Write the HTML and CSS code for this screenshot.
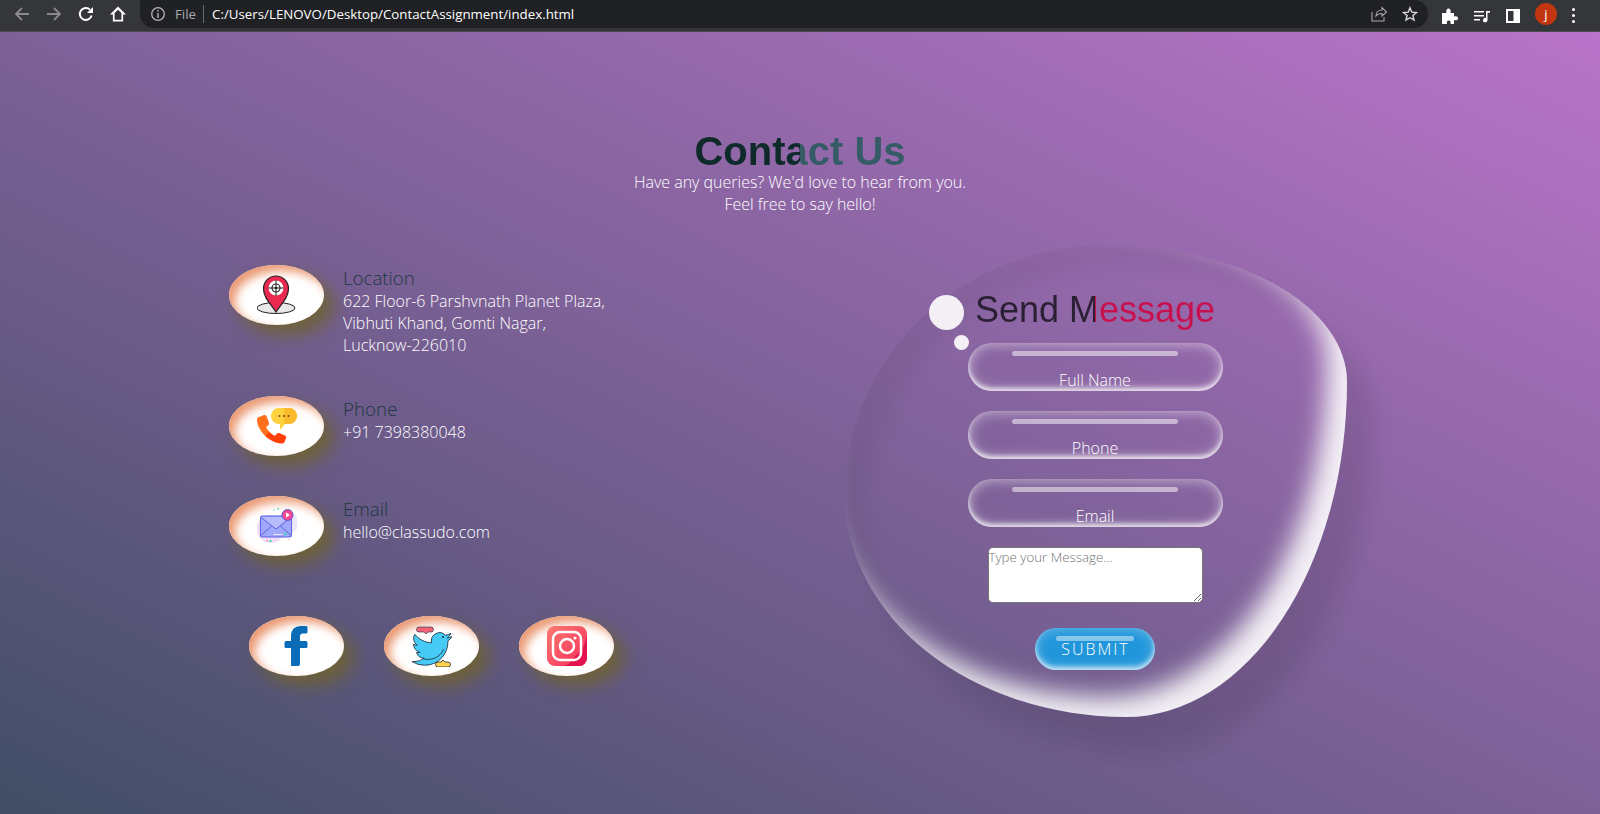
FILE: index.html
```html
<!DOCTYPE html>
<html lang="en">
<head>
  <meta charset="UTF-8">
  <meta name="viewport" content="width=device-width, initial-scale=1.0">
  <title>Contact Us</title>
  <link rel="stylesheet" href="styles.css">
</head>

<body>

  <!-- Browser toolbar -->
  <div class="toolbar">
    <div class="nav-icons">
      <svg class="tool-icon" viewBox="0 0 16 16"><path d="M15 8H2M8 2 2 8l6 6" stroke="#8a8b8d" fill="none" stroke-width="1.8"/></svg>
      <svg class="tool-icon" viewBox="0 0 16 16"><path d="M1 8h13M8 2l6 6-6 6" stroke="#8a8b8d" fill="none" stroke-width="1.8"/></svg>
      <svg class="tool-icon" viewBox="0 0 16 16"><path d="M13.6 9.5A6 6 0 1 1 12 3.6" stroke="#fff" fill="none" stroke-width="2"/><path d="M15 1v6H9z" fill="#fff"/></svg>
      <svg class="tool-icon" viewBox="1 1 14 14"><path d="M8 1.500 1 8.500h2.500v6h9v-6H15zM8 4.200l3 3v5.800H5V7.200z" fill="#fff" fill-rule="evenodd"/></svg>
    </div>
    <div class="address-bar">
      <svg class="info-icon" viewBox="0 0 16 16"><circle cx="8" cy="8" r="6.300" stroke="#b5b6b8" stroke-width="1.300" fill="none"/><path d="M7.300 7h1.400v5H7.300zM7.300 4h1.400v1.500H7.300z" fill="#b5b6b8"/></svg>
      <span class="scheme">File</span>
      <span class="url">C:/Users/LENOVO/Desktop/ContactAssignment/index.html</span>
      <svg class="bar-icon share-icon" viewBox="0 0 16 16"><path d="M1 6v9h12v-4M5 10c0-4 3-6 6-6V1.500L15.500 6 11 10V7.500c-3 0-5 1-6 2.500z" stroke="#a9aaac" fill="none" stroke-width="1.100"/></svg>
      <svg class="bar-icon" viewBox="0 0 16 16"><path d="m8 1.800 1.800 4.300 4.700.4-3.600 3 1.100 4.600L8 11.700l-4 2.400 1.100-4.600-3.600-3 4.700-.4z" stroke="#d5d6d7" fill="none" stroke-width="1.400"/></svg>
    </div>
    <div class="ext-icons">
      <svg class="tool-icon puzzle-icon" viewBox="0 0 16 16"><path d="M0 5h4.500C3.700 2 5 .5 6.500.5S9.300 2 8.500 5H12v3.500c3-.8 4 .4 4 1.800s-1 2.600-4 1.800V16H8.500c.6-2.800-.4-3.600-1.700-3.600S4.400 13.200 5 16H0z" fill="#fff"/></svg>
      <svg class="tool-icon" viewBox="0 0 16 16"><path d="M0 3h10v1.400H0zM0 7h10v1.400H0zM0 11h6v1.400H0z" fill="#fff"/><path d="M12 3h4v1.800h-2.500V12a2.200 2.200 0 1 1-1.500-2z" fill="#fff"/></svg>
      <svg class="tool-icon" viewBox="0 0 16 16"><path d="M1 1h14v14H1zM3 3v10h5.500V3z" fill="#fff" fill-rule="evenodd"/></svg>
      <span class="avatar">j</span>
      <span class="menu-dots"><i></i><i></i><i></i></span>
    </div>
  </div>

  <div class="page">
    <div class="heading">
      <h1>Contact Us</h1>
      <p>Have any queries? We'd love to hear from you.<br>Feel free to say hello!</p>
    </div>

    <div class="content">
      <div class="info">
        <div class="info-row">
          <div class="oval">
            <svg width="40" height="40" viewBox="1 0 40 40">
              <ellipse cx="20" cy="33" rx="19" ry="5.500" fill="#e8e8e8" stroke="#222" stroke-width="1"/>
              <path d="M20 37C15 29 7.500 23 7.500 13.500a12.500 12.500 0 0 1 25 0c0 9.500-7.500 15.500-12.500 23.500z" fill="#e9294f" stroke="#222" stroke-width="1.200"/>
              <circle cx="20" cy="13" r="7.500" fill="#fff"/>
              <circle cx="20" cy="13" r="4" fill="none" stroke="#222" stroke-width="1.200"/>
              <circle cx="20" cy="13" r="1.300" fill="#222"/>
              <path d="M20 5v16M12 13h16" stroke="#222" stroke-width="1"/>
            </svg>
          </div>
          <div class="info-text">
            <h3>Location</h3>
            <p>622 Floor-6 Parshvnath Planet Plaza,<br>Vibhuti Khand, Gomti Nagar,<br>Lucknow-226010</p>
          </div>
        </div>

        <div class="info-row">
          <div class="oval">
            <svg width="40" height="36" viewBox="0 0 40 36">
              <defs>
                <linearGradient id="handset" x1="0" y1="0" x2="1" y2="1">
                  <stop offset="0.52" stop-color="#ff6f1e"/>
                  <stop offset="0.52" stop-color="#ff3f04"/>
                </linearGradient>
              </defs>
              <path d="M2 9l5-2c1 0 2 0 2.500 1L12 15c0 1 0 2-1 2.500l-2 1.500c2 4 5 7 9 9l1.500-2c.5-1 1.500-1 2.500-1l6 2.500c1 .5 1.500 1.500 1 2.500l-1.500 4c-.5 1-1.500 1.500-3 1.500C12 35 0 22 0 11.500 0 10 1 9 2 9z" fill="url(#handset)"/>
              <path d="M22 0h10a8 8 0 0 1 0 16h-4l-5 6v-6h-1a8 8 0 0 1 0-16z" fill="#ffd240"/>
              <path d="M27 0h5a8 8 0 0 1 0 16h-5z" fill="#fbb92e"/>
              <circle cx="22.500" cy="8" r="1" fill="#7a4a2a"/><circle cx="27" cy="8" r="1" fill="#7a4a2a"/><circle cx="31.500" cy="8" r="1" fill="#7a4a2a"/>
            </svg>
          </div>
          <div class="info-text">
            <h3>Phone</h3>
            <p>+91 7398380048</p>
          </div>
        </div>

        <div class="info-row">
          <div class="oval">
            <svg width="40" height="40" viewBox="1.500 0 40 40">
              <circle cx="15" cy="23" r="14" fill="#f3dcf5"/>
              <circle cx="32" cy="17" r="11" fill="#ece6fb"/>
              <rect x="5" y="10" width="31" height="21" rx="1.500" fill="#9fa8fb" stroke="#5b62dd" stroke-width="1"/>
              <path d="M5 11l15.500 12L36 11" fill="#b6bcfd" stroke="#5b62dd" stroke-width="1"/>
              <path d="M5 30l11-10M36 30 25 20" stroke="#5b62dd" stroke-width="1"/>
              <circle cx="32" cy="9" r="5.500" fill="#f3488e" stroke="#6a55d8" stroke-width="1"/>
              <path d="m30.500 6.500 4 2.500-4 2.500z" fill="#fff"/>
              <path d="M22 2h1.500v1.500H22zM18 4h1v1h-1zM29 27h2v2h-2zM14 34h2v2h-2z" fill="#2fe3a8"/>
              <path d="M11 34h1.500v1.500H11zM33 33h1v1h-1z" fill="#f07fb6"/>
              <path d="M18 28h9v1h-9z" fill="#e4e7ff"/>
            </svg>
          </div>
          <div class="info-text">
            <h3>Email</h3>
            <p>hello@classudo.com</p>
          </div>
        </div>

        <div class="social">
          <div class="oval">
            <svg width="40" height="40" viewBox="0 0 40 40">
              <path d="M14 40V22H9a1.500 1.500 0 0 1-1.500-1.500v-4A1.500 1.500 0 0 1 9 15h5v-5C14 3.500 18 0 24 0h5a1.500 1.500 0 0 1 1.500 1.500V6A1.500 1.500 0 0 1 29 7.500h-3c-2 0-3 1-3 3V15h6a1.500 1.500 0 0 1 1.500 1.500v4A1.500 1.500 0 0 1 29 22h-6v16a2 2 0 0 1-2 2z" fill="#0a6cb6"/>
            </svg>
          </div>
          <div class="oval">
            <svg width="40" height="41" viewBox="0 0 40 41">
              <g transform="translate(0 3) scale(1.667)">
                <path d="M23.953 4.570a10 10 0 0 1-2.825.775 4.958 4.958 0 0 0 2.163-2.723c-.951.555-2.005.959-3.127 1.184a4.920 4.920 0 0 0-8.384 4.482C7.690 8.095 4.067 6.130 1.640 3.162a4.822 4.822 0 0 0-.666 2.475c0 1.710.870 3.213 2.188 4.096a4.904 4.904 0 0 1-2.228-.616v.060a4.923 4.923 0 0 0 3.946 4.827 4.996 4.996 0 0 1-2.212.085 4.936 4.936 0 0 0 4.604 3.417 9.867 9.867 0 0 1-6.102 2.105c-.390 0-.779-.023-1.170-.067a13.995 13.995 0 0 0 7.557 2.209c9.053 0 13.998-7.496 13.998-13.985 0-.210 0-.420-.015-.630A9.935 9.935 0 0 0 24 4.590z" fill="#45cbf5" stroke="#1c2a3a" stroke-width=".5"/>
                <path d="M7 18c5 1 10-1 12-6" fill="none" stroke="#1c2a3a" stroke-width=".5"/>
              </g>
              <circle cx="31" cy="11" r="1" fill="#1c2a3a"/>
              <path d="M7 1h12a2 2 0 0 1 0 5h-3l-2 2-2-2H7a2.500 2.500 0 0 1 0-5z" fill="#f2647a" stroke="#1c2a3a" stroke-width=".6"/>
              <path d="M26 36h3l2-2 2 2h3a2.300 2.300 0 0 1 0 5H26a2.500 2.500 0 0 1 0-5z" fill="#ffd04d" stroke="#1c2a3a" stroke-width=".8"/>
            </svg>
          </div>
          <div class="oval">
            <svg width="40" height="40" viewBox="0 0 40 40">
              <defs>
                <linearGradient id="insta" x1="0" y1="0" x2="1" y2="1">
                  <stop offset="0" stop-color="#ff7a70"/>
                  <stop offset="1" stop-color="#f32c5c"/>
                </linearGradient>
              </defs>
              <rect width="40" height="40" rx="8" fill="url(#insta)"/>
              <path d="M40 10v22a8 8 0 0 1-8 8H17c8-2 9-9 15-13 4-3 6-11 8-17z" fill="#e3134f"/>
              <rect x="6" y="6" width="28" height="28" rx="7" fill="none" stroke="#fff" stroke-width="2.500"/>
              <circle cx="20" cy="20" r="7" fill="none" stroke="#fff" stroke-width="2.500"/>
              <circle cx="28" cy="12" r="1.600" fill="#fff"/>
            </svg>
          </div>
        </div>
      </div>

      <form class="blob">
        <span class="bubble-big"></span>
        <span class="bubble-small"></span>
        <h2>Send Message</h2>
        <div class="field"><input type="text" placeholder="Full Name"></div>
        <div class="field"><input type="text" placeholder="Phone"></div>
        <div class="field"><input type="email" placeholder="Email"></div>
        <textarea placeholder="Type your Message..."></textarea>
        <button type="button" class="submit-btn">SUBMIT</button>
      </form>
    </div>
  </div>

</body>
</html>
```

FILE: styles.css
```css
body {
  margin: 0;
  height: 814px;
  overflow: hidden;
  font-family: "Open Sans", sans-serif;
  font-weight: 300;
  color: white;
}

/* Browser toolbar */
.toolbar {
  display: flex;
  align-items: flex-start;
  height: 32px;
  box-sizing: border-box;
  background-color: #35363a;
  border-bottom: 1px solid #4a4a4c;
}

.tool-icon {
  width: 16px;
  height: 16px;
  display: block;
}

.puzzle-icon {
  margin-right: 1px;
}

.nav-icons {
  display: flex;
  gap: 16px;
  width: 140px;
  box-sizing: border-box;
  padding: 6px 0 0 14px;
}

.address-bar {
  display: flex;
  align-items: center;
  width: 1288px;
  height: 28px;
  box-sizing: border-box;
  padding: 0 10px;
  background-color: #202124;
  border-radius: 0 14px 14px 14px;
}

.info-icon {
  width: 16px;
  height: 16px;
}

.scheme {
  margin-left: 9px;
  padding-right: 7px;
  border-right: 1px solid #6a6b6d;
  font-size: 13.300px;
  font-weight: 400;
  line-height: 18px;
  color: #a9aaac;
}

.url {
  flex: 1;
  margin-left: 8px;
  font-size: 13.300px;
  font-weight: 400;
  color: white;
}

.bar-icon {
  width: 16px;
  height: 16px;
  margin-left: 16px;
}

.share-icon {
  margin-right: -1px;
}

.ext-icons {
  display: flex;
  align-items: center;
  gap: 15px;
  padding: 6px 0 0 14px;
}

.avatar {
  width: 22px;
  height: 22px;
  margin-top: -3px;
  margin-left: -1px;
  border-radius: 50%;
  background-color: #c1360f;
  font-size: 13px;
  font-weight: 400;
  line-height: 22px;
  text-align: center;
}

.menu-dots {
  display: flex;
  flex-direction: column;
  gap: 3px;
}

.menu-dots i {
  display: block;
  width: 3px;
  height: 3px;
  border-radius: 50%;
  background-color: white;
}

/* Page */
.page {
  height: 782px;
  background-image: linear-gradient(to top right, #414e66, #b974c9);
}

.heading {
  padding-top: 99px;
  text-align: center;
}

h1 {
  display: inline-block;
  margin: 0;
  font-family: "Liberation Sans", Arial, sans-serif;
  font-size: 40px;
  font-weight: bold;
  line-height: 40px;
  background-image: linear-gradient(90deg, #0f2a2b 50%, #355b66 50%);
  -webkit-background-clip: text;
  background-clip: text;
  color: transparent;
  vertical-align: top;
}

.heading p {
  margin: 0;
  font-size: 16px;
  line-height: 22px;
}

.content {
  display: flex;
  margin-top: 30px;
  padding-left: 229px;
}

.info {
  width: 616px;
  padding-top: 20px;
}

.info-row {
  display: flex;
  gap: 19px;
  margin-bottom: 40px;
}

.oval {
  display: flex;
  flex-shrink: 0;
  align-items: center;
  justify-content: center;
  width: 95px;
  height: 60px;
  background-color: white;
  border-radius: 50%;
  box-shadow: inset 6px 6px 10px #eb9a74, 10px 10px 18px #6f6238;
}

.info-text h3 {
  margin: 0;
  padding-top: 1px;
  font-size: 18.700px;
  font-weight: 300;
  line-height: 24px;
  color: #1c3840;
}

.info-text p {
  margin: 0;
  font-size: 16px;
  line-height: 22px;
}

.social {
  display: flex;
  gap: 40px;
  padding-left: 20px;
  margin-top: 60px;
}

/* Send message card */
.blob {
  position: relative;
  display: flex;
  flex-direction: column;
  align-items: center;
  width: 502px;
  height: 472px;
  box-sizing: border-box;
  padding: 44px 2px 0 0;
  border-radius: 52% 48% 44% 56% / 53% 29% 71% 47%;
  box-shadow: inset 20px 20px 20px rgba(0, 0, 0, 0.05),
    25px 35px 20px rgba(0, 0, 0, 0.05),
    25px 30px 30px rgba(0, 0, 0, 0.05),
    inset -20px -20px 25px rgba(255, 255, 255, 0.9);
}

.bubble-big {
  position: absolute;
  left: 84px;
  top: 50px;
  width: 35px;
  height: 35px;
  border-radius: 50%;
  background-color: rgba(255, 255, 255, 0.9);
}

.bubble-small {
  position: absolute;
  left: 109px;
  top: 90px;
  width: 15px;
  height: 15px;
  border-radius: 50%;
  background-color: rgba(255, 255, 255, 0.9);
}

h2 {
  margin: 0 0 13px;
  font-family: "Liberation Sans", Arial, sans-serif;
  font-size: 36px;
  font-weight: normal;
  line-height: 41px;
  background-image: linear-gradient(90deg, #2a1f33 50%, #c9104e 50%);
  -webkit-background-clip: text;
  background-clip: text;
  color: transparent;
}

.field {
  position: relative;
  width: 255px;
  height: 48px;
  margin-bottom: 20px;
  border-radius: 24px;
  box-shadow: inset 0 0 14px rgba(255, 255, 255, 0.6),
    inset 0 -3px 4px rgba(255, 255, 255, 0.7);
}

.field::before {
  content: "";
  position: absolute;
  left: 44px;
  top: 8px;
  width: 166px;
  height: 5px;
  border-radius: 3px;
  background-color: rgba(255, 255, 255, 0.5);
}

.field input {
  display: block;
  width: 100%;
  height: 100%;
  box-sizing: border-box;
  padding: 26px 0 0;
  border: none;
  outline: none;
  background: transparent;
  font-family: "Open Sans", sans-serif;
  font-size: 16px;
  font-weight: 300;
  line-height: 22px;
  text-align: center;
  color: white;
}

.field input::placeholder {
  color: white;
  opacity: 1;
}

textarea {
  display: block;
  width: 215px;
  height: 56px;
  box-sizing: border-box;
  margin: 0;
  padding: 0;
  border: 1px solid #767676;
  border-radius: 5px;
  background-color: white;
  font-family: "Open Sans", sans-serif;
  font-size: 13.330px;
  font-weight: 300;
}

.submit-btn {
  position: relative;
  width: 120px;
  height: 42px;
  margin-top: 25px;
  padding: 0 0 0 1px;
  border: none;
  border-radius: 21px;
  background-color: #2196db;
  box-shadow: inset 0 0 14px rgba(255, 255, 255, 0.35),
    inset 0 -3px 5px rgba(255, 255, 255, 0.7);
  font-family: "Open Sans", sans-serif;
  font-size: 16px;
  font-weight: 300;
  letter-spacing: 2px;
  color: white;
}

.submit-btn::before {
  content: "";
  position: absolute;
  left: 21px;
  top: 8px;
  width: 78px;
  height: 5px;
  border-radius: 3px;
  background-color: rgba(255, 255, 255, 0.45);
}
```
